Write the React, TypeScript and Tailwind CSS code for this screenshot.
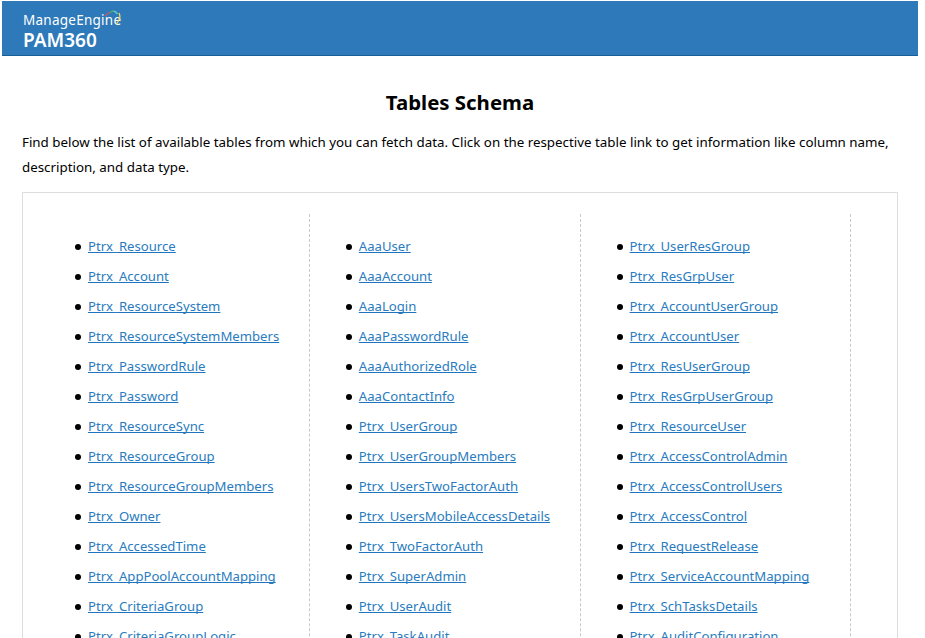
const columns = [
  {
    pad: "pl-[35px]",
    items: [
      "Ptrx_Resource",
      "Ptrx_Account",
      "Ptrx_ResourceSystem",
      "Ptrx_ResourceSystemMembers",
      "Ptrx_PasswordRule",
      "Ptrx_Password",
      "Ptrx_ResourceSync",
      "Ptrx_ResourceGroup",
      "Ptrx_ResourceGroupMembers",
      "Ptrx_Owner",
      "Ptrx_AccessedTime",
      "Ptrx_AppPoolAccountMapping",
      "Ptrx_CriteriaGroup",
      "Ptrx_CriteriaGroupLogic",
    ],
  },
  {
    pad: "pl-[35.500px]",
    items: [
      "AaaUser",
      "AaaAccount",
      "AaaLogin",
      "AaaPasswordRule",
      "AaaAuthorizedRole",
      "AaaContactInfo",
      "Ptrx_UserGroup",
      "Ptrx_UserGroupMembers",
      "Ptrx_UsersTwoFactorAuth",
      "Ptrx_UsersMobileAccessDetails",
      "Ptrx_TwoFactorAuth",
      "Ptrx_SuperAdmin",
      "Ptrx_UserAudit",
      "Ptrx_TaskAudit",
    ],
  },
  {
    pad: "pl-[36px]",
    items: [
      "Ptrx_UserResGroup",
      "Ptrx_ResGrpUser",
      "Ptrx_AccountUserGroup",
      "Ptrx_AccountUser",
      "Ptrx_ResUserGroup",
      "Ptrx_ResGrpUserGroup",
      "Ptrx_ResourceUser",
      "Ptrx_AccessControlAdmin",
      "Ptrx_AccessControlUsers",
      "Ptrx_AccessControl",
      "Ptrx_RequestRelease",
      "Ptrx_ServiceAccountMapping",
      "Ptrx_SchTasksDetails",
      "Ptrx_AuditConfiguration",
    ],
  },
];

function Logo() {
  return (
    <div className="relative w-[100px] text-white">
      <p className="text-[13.500px] leading-[16px] tracking-[0.25px]">ManageEngine</p>
      <p className="text-[19px] leading-[24px] font-semibold">PAM360</p>
      <svg className="absolute left-[80px] top-[-4px]" width="20" height="20" viewBox="0 0 20 20" fill="none">
        <path d="M2 8 Q4 5.500 7 4.500" stroke="#e8545a" strokeWidth="1.2" />
        <path d="M7 4.500 Q9 3 10.500 3" stroke="#4fae6a" strokeWidth="1.5" />
        <path d="M10.500 3 Q13 3.500 14.500 6" stroke="#5fc4c9" strokeWidth="1.5" />
        <path d="M16 5 Q18 9 15.500 13 L13.500 16" stroke="#f0d860" strokeWidth="1.3" />
      </svg>
    </div>
  );
}

export default function App() {
  return (
    <div className="h-[638px] overflow-hidden bg-white pt-px pl-[2px] pr-[7px] font-['Noto_Sans',sans-serif] text-black">
      <header className="h-[55px] border-b border-[#175f96] bg-[#2d79b9] pl-[21px] pt-[11px]">
        <Logo />
      </header>
      <main className="px-[20px]">
        <h1 className="mt-[32px] text-center text-[20.400px] leading-[28px] font-bold">Tables Schema</h1>
        <p className="mt-[14px] text-[13.350px] leading-[25px]">
          Find below the list of available tables from which you can fetch data. Click on the respective table link to
          get information like column name, description, and data type.
        </p>
        <div className="mt-[12px] flex h-[600px] border border-[#dddddd] pl-[17px] pt-[21px]">
          {columns.map((col) => (
            <div key={col.items[0]} className={`w-[270.300px] border-r border-dashed border-[#c8c8c8] pt-[18px] ${col.pad}`}>
              <ul className="flex flex-col">
                {col.items.map((name) => (
                  <li key={name} className="flex h-[30px] items-center">
                    <span className="mr-[7px] size-[6px] rounded-full bg-black" />
                    <a href="#" className="text-[13.150px] text-[#2a7cc0] underline decoration-[#1f74bd] [text-decoration-skip-ink:none]">
                      {name}
                    </a>
                  </li>
                ))}
              </ul>
            </div>
          ))}
        </div>
      </main>
    </div>
  );
}
